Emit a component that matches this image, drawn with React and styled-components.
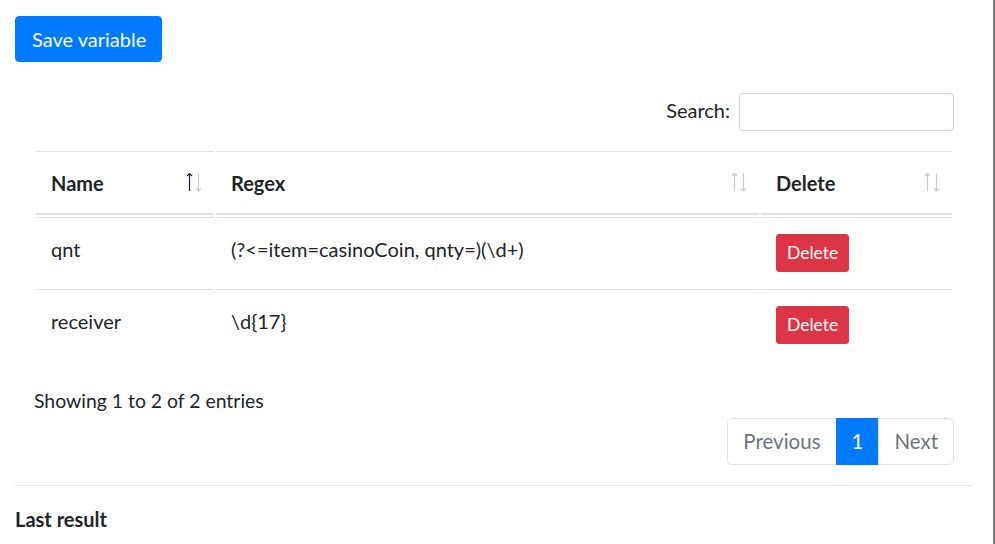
import styled, { createGlobalStyle } from "styled-components";

const GlobalStyle = createGlobalStyle`
  html, body {
    margin: 0;
    padding: 0;
    background: #fff;
  }
  body {
    font-family: Lato, "Noto Sans", sans-serif;
    font-size: 20px;
    line-height: 1.5;
    color: #212529;
  }
  * {
    box-sizing: border-box;
  }
`;

const variables = [
  { name: "qnt", regex: "(?<=item=casinoCoin, qnty=)(\\d+)" },
  { name: "receiver", regex: "\\d{17}" },
];

const Page = styled.div`
  width: 995px;
  min-height: 544px;
  border-right: 2px solid #7b7b7b;
  padding: 16px 21px 0 15px;
`;

const PrimaryButton = styled.button`
  font-family: inherit;
  font-size: 20px;
  line-height: 30px;
  height: 46px;
  padding: 7px 15px 7px 16px;
  color: #fff;
  background: #007bff;
  border: 1px solid #007bff;
  border-radius: 4px;
  cursor: pointer;
`;

const Wrapper = styled.div`
  margin: 31px 18px 0 19px;
`;

const FilterRow = styled.div`
  display: flex;
  justify-content: flex-end;
  align-items: center;
  gap: 9px;
  margin-bottom: 18px;

  label {
    margin-top: -4px;
  }
`;

const SearchInput = styled.input`
  width: 215px;
  height: 38px;
  font-family: inherit;
  font-size: 17px;
  padding: 4px 10px;
  border: 1px solid #ced4da;
  border-radius: 4px;
`;

const Table = styled.table`
  width: 100%;
  border-collapse: separate;
  border-spacing: 2px;
  margin: 0;
`;

const Th = styled.th`
  position: relative;
  text-align: left;
  font-weight: 700;
  padding: 16px 30px 15px 15px;
  border-top: 1px solid #dee2e6;
  border-bottom: 2px solid #dee2e6;
  width: ${(p) => p.$width || "auto"};
`;

const SortIcon = styled.svg`
  position: absolute;
  top: 21px;
  right: 11px;
  width: 16px;
  height: 19px;
  fill: none;
  stroke-width: 1.2;
`;

const Arrow = styled.path`
  stroke: ${(p) => (p.$on ? "#2d1b3d" : "#c8cbce")};
`;

const Td = styled.td`
  vertical-align: top;
  padding: 16px 15px 15px 15px;
  border-top: 1px solid #dee2e6;
  font-size: 20px;
`;

const DangerButton = styled.button`
  font-family: inherit;
  font-size: 17.5px;
  line-height: 26px;
  height: 38px;
  padding: 5px 10px;
  color: #fff;
  background: #dc3545;
  border: 1px solid #dc3545;
  border-radius: 3px;
  cursor: pointer;
`;

const Info = styled.div`
  padding-top: 25px;
  font-size: 19.4px;
  line-height: 30px;
`;

const PagerRow = styled.div`
  display: flex;
  justify-content: flex-end;
  margin-top: 2px;
`;

const Pager = styled.ul`
  display: flex;
  list-style: none;
  margin: 0;
  padding: 0;
`;

const PageLink = styled.li`
  height: 47px;
  padding: 10px 15px;
  line-height: 25px;
  font-size: 20.5px;
  border: 1px solid ${(p) => (p.$active ? "#007bff" : "#dee2e6")};
  background: ${(p) => (p.$active ? "#007bff" : "#fff")};
  color: ${(p) => (p.$active ? "#fff" : "#6c757d")};
  margin-left: -1px;

  &:first-child {
    margin-left: 0;
    border-radius: 5px 0 0 5px;
  }
  &:last-child {
    border-radius: 0 5px 5px 0;
  }
`;

const Rule = styled.hr`
  margin: 20px 0 0;
  border: 0;
  border-top: 1px solid #e3e3e3;
`;

const SectionTitle = styled.h5`
  margin: 0;
  padding-top: 18px;
  font-size: 20px;
  font-weight: 700;
  line-height: 30px;
`;

function Sort({ asc }) {
  return (
    <SortIcon viewBox="0 0 16 19">
      <Arrow $on={asc} d="M2.5 0.5V18M0 3L2.5 0.5L5 3" />
      <Arrow d="M11.5 0.5V18M9 15.5L11.5 18L14 15.5" />
    </SortIcon>
  );
}

export default function App() {
  return (
    <>
      <GlobalStyle />
      <Page>
        <PrimaryButton>Save variable</PrimaryButton>
        <Wrapper>
          <FilterRow>
            <label>Search:</label>
            <SearchInput type="search" />
          </FilterRow>
          <Table>
            <thead>
              <tr>
                <Th $width="178px">
                  Name
                  <Sort asc />
                </Th>
                <Th>
                  Regex
                  <Sort />
                </Th>
                <Th $width="191px">
                  Delete
                  <Sort />
                </Th>
              </tr>
            </thead>
            <tbody>
              {variables.map((v) => (
                <tr key={v.name}>
                  <Td>{v.name}</Td>
                  <Td>{v.regex}</Td>
                  <Td>
                    <DangerButton>Delete</DangerButton>
                  </Td>
                </tr>
              ))}
            </tbody>
          </Table>
          <Info>Showing 1 to 2 of 2 entries</Info>
          <PagerRow>
            <Pager>
              <PageLink>Previous</PageLink>
              <PageLink $active>1</PageLink>
              <PageLink>Next</PageLink>
            </Pager>
          </PagerRow>
        </Wrapper>
        <Rule />
        <SectionTitle>Last result</SectionTitle>
      </Page>
    </>
  );
}
